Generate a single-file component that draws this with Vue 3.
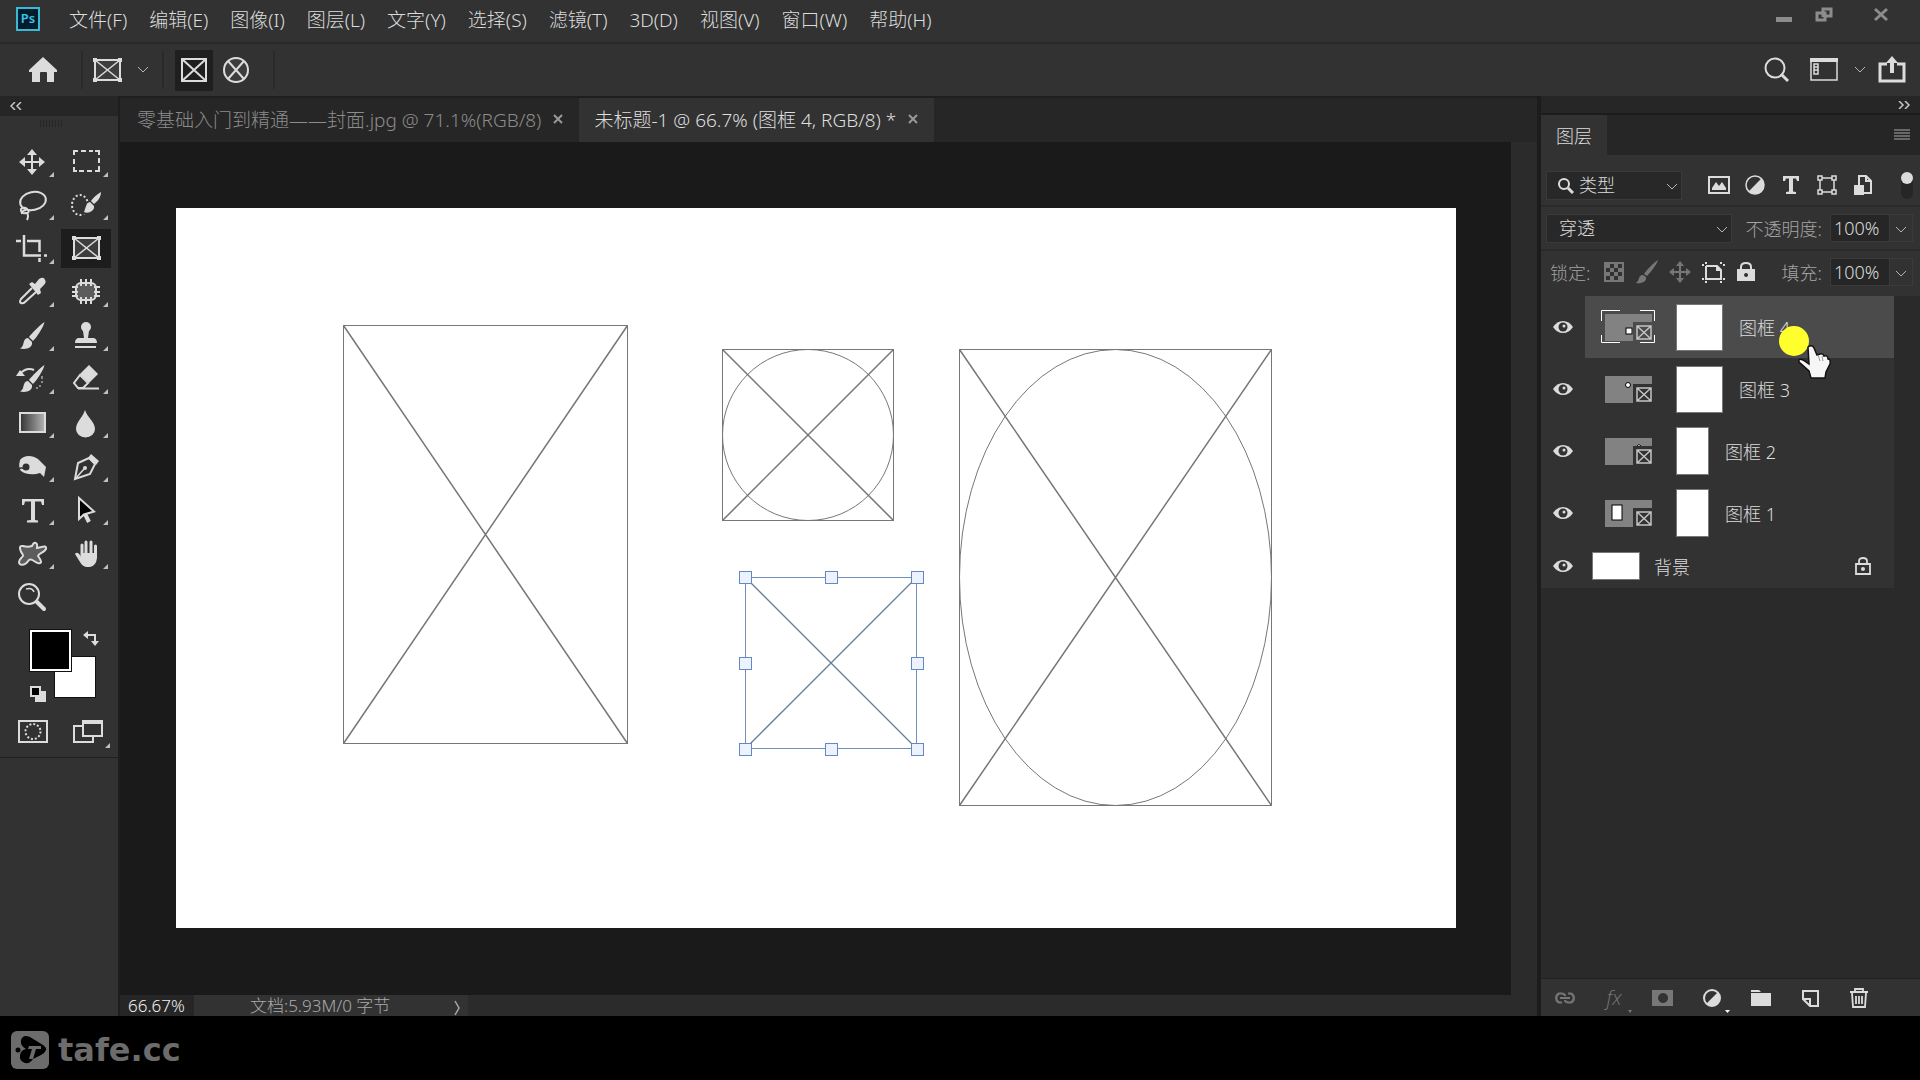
<script setup>
import { ref } from 'vue'

const menus = ['文件(F)', '编辑(E)', '图像(I)', '图层(L)', '文字(Y)', '选择(S)', '滤镜(T)', '3D(D)', '视图(V)', '窗口(W)', '帮助(H)']

const tabs = [
  { title: '零基础入门到精通——封面.jpg @ 71.1%(RGB/8)', active: false },
  { title: '未标题-1 @ 66.7% (图框 4, RGB/8) *', active: true },
]

const brush = '<path d="M12.500 -14 C8 -11 0 -3 -3 1 L1 5 C5 1 11 -8 12.500 -14 Z M-4 2 C-8 2 -8 6 -9 9 Q-10 12 -12 12.500 C-6 14 1 12 0 6 Z" fill="currentColor"/>'
const frameArt = '<path d="M-12 -11 H13 V9 H-12 Z" fill="#3d3d3d" stroke="currentColor" stroke-width="2"/><path d="M-12 -11 L13 9 M13 -11 L-12 9" stroke="currentColor" stroke-width="1.5"/><path d="M-14 -13h4v4h-4z M11 -13h4v4h-4z M-14 7h4v4h-4z M11 7h4v4h-4z" fill="currentColor"/>'
const moveArt = '<path d="M-9 0 H9 M0 -9 V9" stroke="currentColor" stroke-width="2"/><path d="M0 -13 L5 -7 H-5 Z M0 13 L5 7 H-5 Z M-13 0 L-7 -5 V5 Z M13 0 L7 -5 V5 Z" fill="currentColor"/>'

const tools = [
  { name: '移动工具', more: true, art: moveArt },
  { name: '矩形选框工具', more: true, art: '<path d="M-12 -7 V-11 H-8 M-5 -11 H0 M3 -11 H7 M9 -11 H13 V-7 M13 -4 V1 M13 4 V9 H9 M6 9 H1 M-2 9 H-7 M-9 9 H-12 V5 M-12 2 V-3" fill="none" stroke="currentColor" stroke-width="2"/>' },
  { name: '套索工具', more: true, art: '<ellipse cx="1" cy="-4" rx="13" ry="9" transform="rotate(-12 1 -4)" fill="none" stroke="currentColor" stroke-width="2"/><path d="M-11 4 q4 -3 7 1 q2 3 -2 3 q-6 1 -5 -4z M-6 5 q-5 1 -4 4 M-5 8 q2 3 0 7" fill="none" stroke="currentColor" stroke-width="2"/>' },
  { name: '快速选择工具', more: true, art: '<ellipse cx="-6" cy="0" rx="8" ry="10" fill="none" stroke="currentColor" stroke-width="2" stroke-dasharray="2 2.200"/><path d="M-6 8 L3 -3 L13 -12 L15 4 L4 11 Z" fill="#323232"/><path d="M15 -13 C10 -10 7 -7 5 -4 L8 -1 C12 -4 15 -8 15 -13 Z M4 -3 C0 -2 0 2 -2 7 C2 9 9 6 8 1 Z" fill="currentColor"/>' },
  { name: '裁剪工具', more: true, art: '<path d="M-16 -8 H-11 M-8 -14 V6.500 H9 M12 6.500 H15 M-5 -8 H7.500 V3 M7.500 9 V13" fill="none" stroke="currentColor" stroke-width="2.500"/>' },
  { name: '图框工具', more: false, active: true, art: frameArt },
  { name: '吸管工具', more: true, art: '<path d="M0 -4 L-11 7 Q-13 10 -11 11 Q-9 12 -7 10 L4 0" fill="none" stroke="currentColor" stroke-width="2"/><path d="M-3 -8 L0 -10 L3 -8 L7 -13 Q12 -16 13 -12 Q15 -10 11 -6 L8 -3 L9 1 L6 3 Z" fill="currentColor"/>' },
  { name: '修补工具', more: true, art: '<rect x="-10" y="-9" width="20" height="17" rx="5" fill="#5c5c5c" stroke="currentColor" stroke-width="2"/><path d="M-5 -13 V-6 M0 -13 V-6 M5 -13 V-6 M-5 5 V12 M0 5 V12 M5 5 V12 M-14 -5 H-8 M-14 0 H-8 M-14 4 H-8 M8 -5 H14 M8 0 H14 M8 4 H14" stroke="currentColor" stroke-width="2"/>' },
  { name: '画笔工具', more: true, art: brush },
  { name: '仿制图章工具', more: true, art: '<circle cx="0" cy="-9" r="5" fill="currentColor"/><path d="M-3 -5 H3 L2 2 H8 Q11 3 11 7 H-11 Q-11 3 -8 2 H-2 Z M-11 10 H10 V12 H-11 Z" fill="currentColor"/>' },
  { name: '历史记录画笔工具', more: true, art: brush + '<path d="M-16 -3 L-12 -9 L-7 -3 Z" fill="currentColor"/><path d="M-12 -5 Q-6 -12 2 -9" fill="none" stroke="currentColor" stroke-width="2"/><path d="M10 -3 V0 M10 2 V4 M8 6 V8 M4 9 H6" stroke="#aaaaaa" stroke-width="1.500"/>' },
  { name: '橡皮擦工具', more: true, art: '<path d="M3 -13 L11 -5 L3 3 L-5 -5 Z" fill="currentColor" stroke="currentColor" stroke-width="1.500"/><path d="M-6 -4 L2 4 L-3 9 H-8 L-12 4 Z M-8 9.500 H13" fill="none" stroke="currentColor" stroke-width="2"/>' },
  { name: '渐变工具', more: true, art: '<rect x="-12" y="-10" width="25" height="19" fill="url(#fade)" stroke="currentColor" stroke-width="2"/>' },
  { name: '模糊工具', more: true, art: '<path d="M-1 -13 C1 -6 9 -1 9 6 A9.500 8.500 0 0 1 -10 6 C-10 -1 -3 -6 -1 -13 Z" fill="currentColor"/>' },
  { name: '加深工具', more: true, art: '<path d="M-12 -7 C-8 -12 0 -12 6 -8 L14 0 L12 10 L8 6 C2 8 -6 8 -11 4 Q-14 1 -12 -7 Z" fill="currentColor"/><circle cx="-6" cy="0" r="3.500" fill="#323232"/><path d="M-14 2 Q-11 0 -6 2" fill="none" stroke="#323232" stroke-width="1.500"/>' },
  { name: '钢笔工具', more: true, art: '<path d="M-11 12 L-8 -4 L3 -9 L9 -3 L4 7 Z" fill="none" stroke="currentColor" stroke-width="2"/><path d="M-10 11 L-2 2" stroke="currentColor" stroke-width="1.500"/><circle cx="-1" cy="1" r="2" fill="currentColor"/><path d="M2 -9 L5 -13 L13 -6 L10 -2 Z" fill="currentColor"/>' },
  { name: '横排文字工具', more: true, art: '<path d="M-10 -11 H12 V-5 H10 L9 -8.500 H3 V10 L6 10.500 V12.500 H-5 V10.500 L-1 10 V-8.500 H-7 L-8 -5 H-10 Z" fill="currentColor"/>' },
  { name: '路径选择工具', more: true, art: '<path d="M-7 -12 V9 L-2 4.500 L8 1.500 Z" fill="#000000" stroke="currentColor" stroke-width="2"/><path d="M-1 4 L3 12" stroke="currentColor" stroke-width="4"/>' },
  { name: '自定形状工具', more: true, art: '<path d="M0 -8 C2 -13 6 -12 5 -6 C8 -6 15 -10 14 -5 C12 -1 7 -1 6 2 C9 6 11 10 6 9 C2 8 0 4 -3 6 C-7 12 -13 12 -13 8 C-13 4 -8 3 -9 1 C-12 -3 -14 -9 -9 -8 C-6 -7 -3 -7 0 -8 Z" fill="#5c5c5c" stroke="currentColor" stroke-width="2"/>' },
  { name: '抓手工具', more: true, art: '<path d="M-4 3 V-9 M0 2 V-12 M5 2 V-12 M9.500 3 V-8" stroke="currentColor" stroke-width="3" stroke-linecap="round"/><path d="M-11 0 Q-9 -3 -6 1 L-5 3 L-5 -1 H11 V4 Q10 12 4 13 H0 Q-4 12 -6 8 Z" fill="currentColor"/>' },
  { name: '缩放工具', more: false, art: '<circle cx="-3" cy="-3" r="10" fill="none" stroke="currentColor" stroke-width="2"/><path d="M-6 -8 Q0 -10 2 -5" fill="none" stroke="currentColor" stroke-width="1.500"/><path d="M5 5 L12 12" stroke="currentColor" stroke-width="4" stroke-linecap="round"/>' },
]

const filters = [
  { name: '像素图层滤镜', art: '<path d="M-10 -8 H10 V8 H-10 Z" fill="none" stroke="currentColor" stroke-width="2"/><path d="M-7 5 V3 L-3 -3 L0 1 L3 -3 L7 3 V5 Z" fill="currentColor"/>' },
  { name: '调整图层滤镜', art: '<circle r="9" fill="none" stroke="currentColor" stroke-width="1.500"/><path d="M6.400 -6.400 A9 9 0 0 1 -6.400 6.400 Z" fill="currentColor"/>' },
  { name: '文字图层滤镜', art: '<path d="M-8 -9 H8 V-4 H6 L5 -6.500 H2 V6.500 L5 7 V9 H-5 V7 L-2 6.500 V-6.500 H-5 L-6 -4 H-8 Z" fill="currentColor"/>' },
  { name: '形状图层滤镜', art: '<path d="M-7 -7 H7 V7 H-7 Z" fill="none" stroke="currentColor" stroke-width="1.500"/><g fill="#323232" stroke="currentColor" stroke-width="1.500"><rect x="-9" y="-9" width="4" height="4"/><rect x="5" y="-9" width="4" height="4"/><rect x="-9" y="5" width="4" height="4"/><rect x="5" y="5" width="4" height="4"/></g>' },
  { name: '智能对象滤镜', art: '<path d="M-4 0 V-9 H3 L8 -4 V8 H1 M3 -9 V-4 H8" fill="none" stroke="currentColor" stroke-width="2"/><path d="M-9 0 H1 V10 H-9 Z" fill="currentColor"/>' },
]

const locks = [
  { name: '锁定透明像素', dim: true, art: '<path d="M-9 -9 H9 V9 H-9 Z" fill="none" stroke="currentColor" stroke-width="2"/><path d="M-8 -8h4v4h-4z M0 -8h4v4h-4z M-4 -4h4v4h-4z M4 -4h4v4h-4z M-8 0h4v4h-4z M0 0h4v4h-4z M-4 4h4v4h-4z M4 4h4v4h-4z" fill="currentColor"/>' },
  { name: '锁定图像像素', dim: true, art: '<path d="M11 -12 C6 -9 0 -2 -3 2 L0 4 C4 0 10 -8 11 -12 Z M-4 3 C-9 3 -7 8 -11 11 C-6 12 0 10 -1 5 Z" fill="currentColor"/>' },
  { name: '锁定位置', dim: true, art: '<path d="M-8 0 H8 M0 -8 V8" stroke="currentColor" stroke-width="2"/><path d="M0 -11 L4 -6 H-4 Z M0 11 L4 6 H-4 Z M-11 0 L-6 -4 V4 Z M11 0 L6 -4 V4 Z" fill="currentColor"/>' },
  { name: '防止在画板内外自动嵌套', dim: false, art: '<path d="M-7 -10 V-8 M-11 -7 H-9 M-7 -6 V7 H8 V-2 L4 -6 H-7 M-7 9 V11 M8 9 V11 M-11 7 H-9 M10 7 H12 M8 -10 V-8 M10 -7 H12" fill="none" stroke="currentColor" stroke-width="2"/><path d="M3 -7 L9 -1 H3 Z" fill="currentColor"/>' },
  { name: '锁定全部', dim: false, art: '<path d="M-5 -2 V-5 Q-5 -9 0 -9 Q5 -9 5 -5 V-2" fill="none" stroke="currentColor" stroke-width="2"/><path d="M-9 -3 H9 V9 H-9 Z M0 1 a2 2 0 1 0 0.100 0 Z" fill-rule="evenodd" fill="currentColor"/>' },
]

const layers = [
  { name: '图框 4', mask: 'square', selected: true, mark: '<rect x="21" y="14" width="6" height="6" fill="#fff" stroke="#000"/>' },
  { name: '图框 3', mask: 'square', mark: '<circle cx="23" cy="9" r="2.500" fill="#fff" stroke="#000"/>' },
  { name: '图框 2', mask: 'tall', mark: '<path d="M32 8 Q34 5 36 8" fill="#fff" stroke="#000"/>' },
  { name: '图框 1', mask: 'tall', mark: '<rect x="7" y="5" width="10" height="15" fill="#fff" stroke="#000"/>' },
]

const actions = [
  { name: '链接图层', dim: true, art: '<path d="M-3 4.500 H-6 A5 5 0 0 1 -6 -4.500 H-3 Q0 -4 0 -2 M3 4.500 H6 A5 5 0 0 0 6 -4.500 H3 M0 2 Q0 4 3 4.500 M-5 0 H5" fill="none" stroke="currentColor" stroke-width="2.200"/>' },
  { name: '添加图层样式', dim: true, fx: true, art: '<path d="M14 12 H18 L16 15 Z" fill="currentColor"/>' },
  { name: '添加图层蒙版', dim: true, art: '<path d="M-11 -8 H10 V8 H-11 Z M0 -5 a5 5 0 1 0 0.100 0 Z" fill-rule="evenodd" fill="currentColor"/>' },
  { name: '创建新的填充或调整图层', dim: false, art: '<circle r="8" fill="none" stroke="currentColor" stroke-width="2"/><path d="M6 -6 A8.500 8.500 0 0 1 -6 6 Z" fill="currentColor"/><path d="M13 12 H18 L15.500 15 Z" fill="#ffffff"/>' },
  { name: '创建新组', dim: false, art: '<path d="M-10 -8 H-2 L0 -6 H-10 Z M-10 -5 H10 V8 H-10 Z" fill="currentColor"/>' },
  { name: '创建新图层', dim: false, art: '<path d="M-7 -7 H8 V8 H0 L-7 1 Z M-7 1 H0 V8" fill="none" stroke="currentColor" stroke-width="2"/>' },
  { name: '删除图层', dim: false, art: '<path d="M-9 -6 H9 M-4 -7 V-9 H4 V-7 M-7 -5 L-6 9 H6 L7 -5 M-3 -2 V6 M0 -2 V6 M3 -2 V6" fill="none" stroke="currentColor" stroke-width="1.800"/>' },
]

const handles = [
  [569, 369], [655, 369], [741, 369],
  [569, 455], [741, 455],
  [569, 541], [655, 541], [741, 541],
]

const opacity = ref('100%')
const fill = ref('100%')
</script>

<template>
  <div class="app">
    <header class="menubar">
      <svg class="ps" viewBox="0 0 24 24" aria-label="Ps"><rect x="1" y="1" width="22" height="22" fill="#001d2e" stroke="#3ab8d6" stroke-width="2" /><text x="12" y="16" text-anchor="middle" fill="#3fc4e6">Ps</text></svg>
      <nav class="menus">
        <button v-for="m in menus" :key="m" type="button">{{ m }}</button>
      </nav>
      <div class="window-controls">
        <button type="button" aria-label="最小化"><svg width="18" height="16" viewBox="0 0 18 16"><path d="M1 10h16v5H1z" fill="currentColor" /></svg></button>
        <button type="button" aria-label="还原"><svg width="18" height="16" viewBox="0 0 18 16"><path d="M8 10V2h8v7h-6M2 6h8v7H2z" fill="none" stroke="currentColor" stroke-width="3" /></svg></button>
        <button type="button" aria-label="关闭"><svg width="18" height="16" viewBox="0 0 18 16"><path d="M3 2l12 11M15 2L3 13" stroke="currentColor" stroke-width="3" /></svg></button>
      </div>
    </header>

    <div class="options">
      <button type="button" class="home" aria-label="主页"><svg width="28" height="26" viewBox="0 0 28 26"><path d="M14 0L28 13v2h-3v10h-7v-9q0-1-1-1h-5q-1 0-1 1v9H3V15H0v-2z" fill="currentColor" /></svg></button>
      <i class="divider"></i>
      <button type="button" class="preset" aria-label="图框工具预设"><svg width="30" height="26" viewBox="-15 -14 30 26" v-html="frameArt"></svg><svg class="chev" viewBox="0 0 12 8"><path d="M1 1l5 5 5-5" /></svg></button>
      <i class="divider"></i>
      <button type="button" class="shape on" aria-label="矩形画框"><svg width="28" height="28" viewBox="0 0 28 28"><path d="M2 3h24v22H2zM2 3l24 22M26 3L2 25" fill="none" stroke="currentColor" stroke-width="2" /></svg></button>
      <button type="button" class="shape" aria-label="椭圆画框"><svg width="28" height="28" viewBox="0 0 28 28"><circle cx="14" cy="14" r="12" fill="#3d3d3d" stroke="currentColor" stroke-width="2" /><path d="M6 5l16 18M22 5L6 23" stroke="currentColor" stroke-width="2" /></svg></button>
      <i class="divider last"></i>
      <div class="options-right">
        <button type="button" aria-label="搜索"><svg width="26" height="26" viewBox="0 0 26 26"><circle cx="11" cy="11" r="9.5" fill="none" stroke="currentColor" stroke-width="2" /><path d="M17 17l7 7" stroke="currentColor" stroke-width="3" /></svg></button>
        <button type="button" class="workspace" aria-label="工作区"><svg width="28" height="24" viewBox="0 0 28 24"><path d="M1 2h26v20H1zM4 6h4v10H4zM4 9h4M4 12h4" fill="none" stroke="currentColor" stroke-width="1.5" /><path d="M0 0h28v4H0z" fill="currentColor" /></svg><svg class="chev" viewBox="0 0 12 8"><path d="M1 1l5 5 5-5" /></svg></button>
        <button type="button" aria-label="共享"><svg width="28" height="28" viewBox="0 0 28 28"><path d="M9 8H2v17h24V8h-7" fill="none" stroke="currentColor" stroke-width="3" /><path d="M14 0l6 7h-4v10h-4V7H8z" fill="currentColor" /></svg></button>
      </div>
    </div>

    <div class="workarea">
      <aside class="toolbar">
        <div class="strip"><svg width="12" height="8" viewBox="0 0 12 8"><path d="M5 0L1 4l4 4M11 0L7 4l4 4" fill="none" stroke="#c8c8c8" stroke-width="1.500" /></svg></div>
        <div class="grip"></div>
        <div class="tools">
          <button v-for="t in tools" :key="t.name" type="button" :class="{ on: t.active }" :aria-label="t.name">
            <svg width="44" height="32" viewBox="-22 -16 44 32">
              <defs v-if="t.name === '渐变工具'"><linearGradient id="fade"><stop offset="0" stop-color="#333" /><stop offset="1" stop-color="#b5b5b5" /></linearGradient></defs>
              <g v-html="t.art"></g>
              <path v-if="t.more" d="M22 10v5h-5z" fill="#c0c0c0" />
            </svg>
          </button>
        </div>
        <div class="swatches">
          <button type="button" class="back" aria-label="背景色"></button>
          <button type="button" class="fore" aria-label="前景色"></button>
          <button type="button" class="swap" aria-label="切换颜色"><svg width="16" height="16" viewBox="0 0 16 16"><path d="M4 4h8v8" fill="none" stroke="currentColor" stroke-width="2" /><path d="M0 4l5-4v8zM12 15l-4-5h8z" fill="currentColor" /></svg></button>
          <button type="button" class="reset" aria-label="默认颜色"><svg width="16" height="16" viewBox="0 0 16 16"><path d="M5 5h11v11H5z" fill="currentColor" /><path d="M1 1h9v9H1z" fill="#000" stroke="currentColor" stroke-width="2" /></svg></button>
        </div>
        <div class="modes">
          <button type="button" aria-label="快速蒙版"><svg width="30" height="24" viewBox="0 0 30 24"><path d="M1 1h28v21H1z" fill="none" stroke="currentColor" stroke-width="2" /><circle cx="15" cy="11.5" r="7.5" fill="none" stroke="currentColor" stroke-width="2" stroke-dasharray="2 1.930" /></svg></button>
          <button type="button" aria-label="屏幕模式"><svg width="38" height="28" viewBox="0 0 38 28"><path d="M1 6h19v16H1z" fill="none" stroke="currentColor" stroke-width="2" /><path d="M10 1h19v15H10z" fill="#323232" stroke="currentColor" stroke-width="2" /><path d="M9 0h21v4H9z" fill="currentColor" /><path d="M37 23v5h-5z" fill="#c0c0c0" /></svg></button>
        </div>
      </aside>

      <main class="document">
        <div class="tabs">
          <div v-for="t in tabs" :key="t.title" class="tab" :class="{ on: t.active }">
            <button type="button" class="title">{{ t.title }}</button>
            <button type="button" class="close" aria-label="关闭文档"><svg width="10" height="10" viewBox="0 0 10 10"><path d="M1 1l8 8M9 1L1 9" stroke="currentColor" stroke-width="2" /></svg></button>
          </div>
        </div>
        <div class="viewport">
          <div class="canvas">
            <svg class="artboard" viewBox="0 0 1280 720">
              <rect width="1280" height="720" fill="#fff" />
              <g fill="none" stroke="#777" stroke-width="1">
                <rect x="167.500" y="117.500" width="284" height="418" />
                <path d="M167.500 117.500l284 418M451.500 117.500l-284 418" stroke-width="1.500" />
                <rect x="546.500" y="141.500" width="171" height="171" />
                <circle cx="632" cy="227" r="85.500" />
                <path d="M546.500 141.500l171 171M717.500 141.500l-171 171" stroke-width="1.500" />
                <rect x="783.500" y="141.500" width="312" height="456" />
                <ellipse cx="939.500" cy="369.500" rx="156" ry="228" />
                <path d="M783.500 141.500l312 456M1095.500 141.500l-312 456" stroke-width="1.500" />
              </g>
              <path d="M569.500 369.500h171v171h-171z" fill="none" stroke="#6f8fbc" />
              <path d="M569.500 369.500l171 171M740.500 369.500l-171 171" stroke="#667f97" stroke-width="1.300" />
              <rect v-for="h in handles" :key="h.join()" :x="h[0] - 5.5" :y="h[1] - 5.5" width="12" height="12" fill="#edf3fe" stroke="#6488c0" />
            </svg>
          </div>
          <div class="scroll-y"></div>
        </div>
        <div class="status">
          <input class="zoom" type="text" value="66.67%" aria-label="缩放比例">
          <button type="button" class="docsize"><span>文档:5.93M/0 字节</span><svg width="8" height="16" viewBox="0 0 8 16"><path d="M2 1l4 7-4 7" fill="none" stroke="currentColor" stroke-width="1.500" /></svg></button>
        </div>
      </main>

      <aside class="panel">
        <div class="strip right"><svg width="12" height="8" viewBox="0 0 12 8"><path d="M1 0l4 4-4 4M7 0l4 4-4 4" fill="none" stroke="#c8c8c8" stroke-width="1.500" /></svg></div>
        <div class="panel-tabs">
          <button type="button" class="panel-tab">图层</button>
          <button type="button" class="panel-menu" aria-label="面板菜单"><svg width="16" height="12" viewBox="0 0 16 12"><path d="M0 1h16M0 4h16M0 7h16M0 10h16" stroke="currentColor" /></svg></button>
        </div>
        <div class="row filter-row">
          <div class="pick kind">
            <svg class="lead" width="16" height="16" viewBox="0 0 16 16"><circle cx="6" cy="6" r="5" fill="none" stroke="currentColor" stroke-width="2" /><path d="M10 10l5 5" stroke="currentColor" stroke-width="3" /></svg>
            <select aria-label="滤镜类型"><option>类型</option></select>
            <svg class="chev" viewBox="0 0 12 8"><path d="M1 1l5 5 5-5" /></svg>
          </div>
          <div class="filters">
            <button v-for="f in filters" :key="f.name" type="button" :aria-label="f.name"><svg width="24" height="24" viewBox="-12 -12 24 24" v-html="f.art"></svg></button>
          </div>
          <button type="button" class="switch" aria-label="图层滤镜开关"></button>
        </div>
        <div class="row blend-row">
          <div class="pick mode">
            <select aria-label="混合模式"><option>穿透</option></select>
            <svg class="chev" viewBox="0 0 12 8"><path d="M1 1l5 5 5-5" /></svg>
          </div>
          <label class="amount"><span>不透明度:</span><input v-model="opacity" type="text"><i><svg class="chev" viewBox="0 0 12 8"><path d="M1 1l5 5 5-5" /></svg></i></label>
        </div>
        <div class="row lock-row">
          <span class="lock-label">锁定:</span>
          <div class="locks">
            <button v-for="l in locks" :key="l.name" type="button" :class="{ dim: l.dim }" :aria-label="l.name"><svg width="24" height="24" viewBox="-12 -12 24 24" v-html="l.art"></svg></button>
          </div>
          <label class="amount"><span>填充:</span><input v-model="fill" type="text"><i><svg class="chev" viewBox="0 0 12 8"><path d="M1 1l5 5 5-5" /></svg></i></label>
        </div>

        <ul class="layers">
          <li v-for="l in layers" :key="l.name" :class="{ selected: l.selected }">
            <button type="button" class="eye" aria-label="可见性"><svg width="20" height="14" viewBox="0 0 20 14"><path d="M0 7Q4 1 10 1t10 6q-4 6-10 6T0 7z" fill="currentColor" /><circle cx="10" cy="7" r="4.500" fill="#323232" /><circle cx="11" cy="6" r="1.500" fill="currentColor" /></svg></button>
            <button type="button" class="layer">
              <svg class="thumb" width="56" height="36" viewBox="-5 -5 56 36">
                <rect width="47" height="27" fill="#828282" />
                <g v-html="l.mark"></g>
                <rect x="28" y="8" width="20" height="20" :fill="l.selected ? '#4b4b4b' : '#323232'" />
                <path d="M32 12h14v13H32zM32 12l14 13M46 12L32 25" fill="none" stroke="#c4c4c4" stroke-width="1.500" />
                <path v-if="l.selected" d="M-3.500 7V-3.500H15M35 -3.500H49.500V7M49.500 21V28.500H35M15 28.500H-3.500V21" fill="none" stroke="#fff" />
              </svg>
              <span class="mask" :class="l.mask"></span>
              <span class="name">{{ l.name }}</span>
            </button>
            <svg v-if="l.selected" class="pointer" width="54" height="54" viewBox="0 0 54 54">
              <circle cx="16" cy="16" r="15" fill="#ffff2e" />
              <path d="M30 22q4-3 6 1l3 7 3-1q3-1 4 2 4-1 4 3 3 0 2 5l-4 8-1 6H33l-2-7-10-9q-1-4 4-2l6 4z" fill="#f6f6f6" stroke="#111" stroke-width="1.500" />
              <path d="M40 30l2 6M44 31l1 5" stroke="#999" stroke-width="1" />
            </svg>
          </li>
          <li class="background">
            <button type="button" class="eye" aria-label="可见性"><svg width="20" height="14" viewBox="0 0 20 14"><path d="M0 7Q4 1 10 1t10 6q-4 6-10 6T0 7z" fill="currentColor" /><circle cx="10" cy="7" r="4.500" fill="#323232" /><circle cx="11" cy="6" r="1.500" fill="currentColor" /></svg></button>
            <button type="button" class="layer">
              <span class="mask wide"></span>
              <span class="name">背景</span>
              <svg class="locked" width="16" height="18" viewBox="0 0 16 18"><path d="M1 7h14v10H1zM4 7V4q0-3 4-3t4 3v3" fill="none" stroke="currentColor" stroke-width="1.800" /><circle cx="8" cy="12" r="2" fill="currentColor" /></svg>
            </button>
          </li>
        </ul>

        <div class="actions">
          <button v-for="a in actions" :key="a.name" type="button" :class="{ dim: a.dim }" :aria-label="a.name"><span v-if="a.fx" class="fx">fx</span><svg width="36" height="32" viewBox="-18 -16 36 32" v-html="a.art"></svg></button>
        </div>
      </aside>
    </div>

    <footer class="brand">
      <svg width="40" height="40" viewBox="0 0 40 40"><rect x="1" y="1" width="38" height="38" rx="6" fill="#6c6c6c" /><path d="M11 10q2-6 9-3l13 8q4 3 3 5-1 3-5 5l-8 4q-3 5-8 4-6-2-5-8 1-5 6-6-6-3-5-9z" fill="#000" /><circle cx="8" cy="20" r="2.500" fill="#000" /><path d="M19 16h12v3h-5l-3 10h-4l3-10h-4z" fill="#6c6c6c" /></svg>
      <span>tafe.cc</span>
    </footer>
  </div>
</template>

<style>
body {
  margin: 0;
  background: #000;
}
</style>

<style scoped>
.app {
  display: flex;
  flex-direction: column;
  min-height: 100vh;
  background: #000;
  color: #dcdcdc;
  font-family: "Noto Sans", "Noto Sans CJK SC", sans-serif;
  font-size: 18px;
  font-weight: 300;
}
*, *::before, *::after { box-sizing: border-box; }
button, input, select {
  margin: 0;
  padding: 0;
  border: 0;
  background: none;
  color: inherit;
  font: inherit;
}
button {
  display: flex;
  align-items: center;
  justify-content: center;
  white-space: nowrap;
}
svg { display: block; flex: none; }
.chev {
  width: 12px;
  height: 8px;
  fill: none;
  stroke: #b4b4b4;
}

.menubar {
  display: flex;
  align-items: flex-start;
  height: 44px;
  padding-left: 16px;
  background: #323232;
  border-bottom: 2px solid #292929;
}
.ps { width: 24px; height: 24px; margin-top: 7px; }
.ps text { font-size: 13px; font-weight: 600; }
.menus {
  display: flex;
  gap: 22px;
  margin-left: 29px;
  font-size: 19px;
  line-height: 40px;
}
.window-controls {
  display: flex;
  margin-left: auto;
  padding-right: 3px;
  color: #8c8c8c;
}
.window-controls button { width: 40px; height: 29px; }
.window-controls button:last-child { width: 73px; }

.options {
  display: flex;
  align-items: center;
  height: 52px;
  padding: 0 14px 0 29px;
  background: #323232;
}
.divider {
  width: 2px;
  height: 38px;
  margin-left: 24px;
  background: #2a2a2a;
}
.preset { gap: 15px; margin-left: 9px; }
.preset + .divider { margin-left: 13px; }
.shape { width: 38px; height: 41px; margin-left: 4px; }
.shape.on { margin-left: 11px; background: #1f1f1f; }
.divider.last { margin-left: 18px; }
.options-right {
  display: flex;
  align-items: center;
  gap: 20px;
  margin-left: auto;
}
.workspace { gap: 16px; }
.options-right button:last-child { margin-left: -8px; }

.workarea { display: flex; flex: 1; }
.strip {
  display: flex;
  align-items: center;
  height: 20px;
  padding: 0 10px;
  background: #262626;
}
.strip.right { justify-content: flex-end; height: 19px; border-bottom: 2px solid #1c1c1c; }

.toolbar {
  flex: none;
  width: 120px;
  background: #323232;
  border-right: 2px solid #1e1e1e;
}
.grip {
  width: 24px;
  height: 7px;
  margin: 4px 0 13px 40px;
  background: repeating-linear-gradient(90deg, #262626 0 1px, #323232 1px 3px);
}
.tools {
  display: grid;
  grid-template-columns: repeat(2, 54px);
  grid-auto-rows: 1fr;
  align-items: center;
  justify-items: center;
  height: 479px;
  padding-left: 5px;
}
.tools button { width: 50px; height: 39px; }
.tools .on { background: #1d1d1d; }
.swatches {
  position: relative;
  width: 70px;
  height: 74px;
  margin: 11px 0 0 29px;
}
.swatches button { position: absolute; }
.fore {
  top: 0;
  left: 1px;
  width: 41px;
  height: 41px;
  background: #000;
  border: 2px solid #fff;
  outline: 1px solid #111;
}
.back {
  top: 27px;
  left: 26px;
  width: 40px;
  height: 40px;
  background: #fff;
  outline: 1px solid #111;
}
.swap { top: 1px; right: 0; }
.reset { bottom: 2px; left: 1px; }
.modes {
  display: flex;
  align-items: flex-start;
  gap: 25px;
  height: 54px;
  padding: 16px 0 0 18px;
  border-bottom: 1px solid #202020;
}

.document {
  display: flex;
  flex: 1;
  flex-direction: column;
  min-width: 0;
  background: #262626;
}
.tabs {
  display: flex;
  height: 46px;
  border-top: 2px solid #1e1e1e;
}
.tab {
  display: flex;
  align-items: center;
  gap: 12px;
  padding: 0 16px 3px 17px;
  color: #8c8c8c;
  font-size: 19px;
}
.tab.on { background: #323232; color: #dedede; padding-left: 15px; }
.close { color: #999; }
.viewport { display: flex; flex: 1; }
.canvas {
  display: flex;
  flex: 1;
  align-items: center;
  padding: 65px 55px 67px 56px;
  background: #1a1a1a;
}
.artboard { width: 100%; flex: 1; }
.scroll-y { width: 26px; background: #2b2b2b; }
.status {
  display: flex;
  height: 21px;
  font-size: 17px;
  line-height: 21px;
  background: #2b2b2b;
}
.zoom { width: 74px; height: 21px; padding-left: 8px; background: #262626; color: #f0f0f0; font-size: 17px; }
.docsize {
  justify-content: space-between;
  align-items: flex-start;
  width: 274px;
  padding: 0 7px 0 56px;
  background: #323232;
  color: #aaa;
}
.docsize svg { margin-top: 5px; }

.panel {
  display: flex;
  flex: none;
  flex-direction: column;
  width: 383px;
  background: #2a2a2a;
  border-left: 4px solid #1c1c1c;
}
.panel-tabs {
  display: flex;
  align-items: center;
  justify-content: space-between;
  height: 40px;
  background: #262626;
}
.panel-tab { width: 66px; height: 40px; background: #323232; }
.panel-menu { margin-right: 10px; color: #aaa; }
.row {
  display: flex;
  align-items: center;
  padding: 0 7px 0 5px;
  background: #323232;
}
.filter-row { height: 52px; padding-top: 10px; border-bottom: 2px solid #2a2a2a; }
.blend-row { height: 44px; border-bottom: 2px solid #2a2a2a; }
.lock-row { height: 45px; padding-bottom: 4px; }
.pick { position: relative; }
.pick select {
  width: 100%;
  height: 29px;
  appearance: none;
  background: #282828;
  border: 1px solid #3a3a3a;
}
.pick .chev { position: absolute; right: 4px; top: 12px; }
.lead { position: absolute; left: 12px; top: 7px; }
.kind { width: 136px; }
.kind select { padding-left: 32px; }
.mode { width: 186px; }
.mode select { padding-left: 12px; }
.filters { display: flex; gap: 12px; margin-left: 25px; }
.switch {
  align-items: flex-start;
  width: 12px;
  height: 27px;
  margin-left: auto;
  border-radius: 6px;
  background: #262626;
}
.switch::before {
  content: "";
  width: 12px;
  height: 12px;
  border-radius: 6px;
  background: #dcdcdc;
}
.amount {
  display: flex;
  align-items: center;
  margin-left: auto;
  color: #a4a4a4;
}
.amount span { margin-right: 8px; }
.amount input {
  width: 60px;
  height: 28px;
  padding-left: 3px;
  background: #262626;
  border: 1px solid #3a3a3a;
  color: #dcdcdc;
}
.amount i {
  display: flex;
  align-items: center;
  justify-content: center;
  width: 23px;
  height: 28px;
  padding-top: 4px;
  border: 1px solid #3a3a3a;
  border-left: 0;
}
.lock-label { margin-left: 4px; color: #a4a4a4; }
.locks { display: flex; gap: 9px; margin-left: 12px; }
.dim { color: #777; }

.layers {
  flex: 1;
  margin: 0;
  padding: 0 26px 0 0;
  list-style: none;
}
.layers li {
  position: relative;
  display: flex;
  height: 62px;
  background: #323232;
}
.eye { width: 44px; }
.layer {
  flex: 1;
  justify-content: flex-start;
  padding-left: 15px;
}
.selected .layer { background: #4b4b4b; }
.mask { background: #fff; outline: 1px solid #777; }
.square { width: 45px; height: 45px; }
.tall { width: 31px; height: 46px; }
.wide { width: 46px; height: 26px; }
.thumb + .mask { margin-left: 21px; }
.name { margin-left: 17px; }
.layers .background { height: 44px; }
.background .layer { padding: 0 23px 0 8px; }
.background .name { margin-left: 15px; }
.locked { margin-left: auto; }
.pointer { position: absolute; left: 237px; top: 29px; z-index: 1; }

.actions {
  display: flex;
  gap: 13px;
  height: 38px;
  padding-left: 6px;
  background: #323232;
  border-top: 1px solid #222;
}
.actions button { display: grid; }
.actions button > * { grid-area: 1 / 1; }
.fx {
  font-family: "Open Sans", sans-serif;
  font-size: 20px;
  font-style: italic;
  line-height: 20px;
}

.brand {
  display: flex;
  align-items: center;
  gap: 8px;
  height: 64px;
  padding: 3px 0 0 10px;
  color: #6c6c6c;
  font-family: "DejaVu Sans", sans-serif;
  font-size: 32px;
  font-weight: 700;
}
.brand span { line-height: 40px; }
</style>
